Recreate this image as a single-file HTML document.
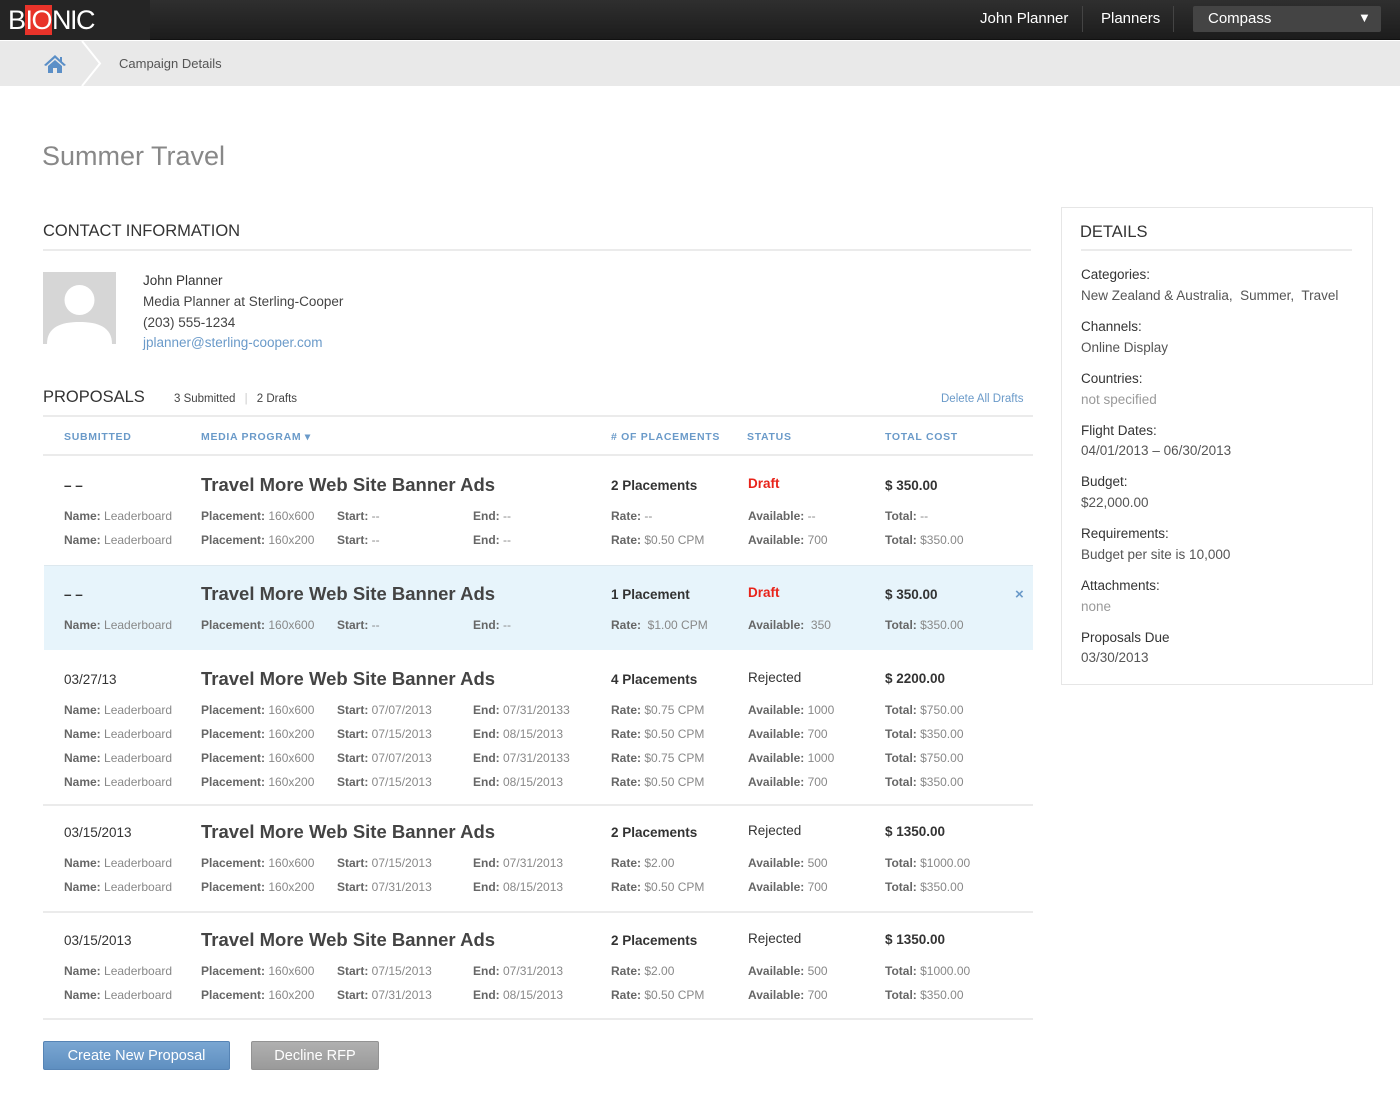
<!DOCTYPE html>
<html><head><meta charset="utf-8">
<style>
*{margin:0;padding:0;box-sizing:border-box}
body{width:1400px;height:1120px;background:#fff;font-family:"Liberation Sans",Arial,sans-serif;position:relative;overflow:hidden;color:#444}
.t{position:absolute;line-height:20px;white-space:nowrap}
.s{font-size:12px;color:#888;margin-top:1px}
.s b{color:#666;font-weight:bold}
.h{font-size:13.5px;font-weight:bold;color:#333;margin-top:1px}
.ti{font-size:18.5px;font-weight:bold;color:#444;line-height:24px;margin-top:1px}
.line{position:absolute;left:43px;width:990px;height:2px;background:#ebebeb}
.th{font-size:10.5px;font-weight:bold;color:#6a9ac9;letter-spacing:.7px;margin-top:1px}
.dl{font-size:13.5px;color:#333;margin-top:1px}
.dv{font-size:13.5px;color:#555;margin-top:1px}
</style></head><body>
<div style="position:absolute;left:0;top:0;width:1400px;height:40px;background:linear-gradient(#2f2f2f,#1c1c1c);border-bottom:1px solid #111"></div>
<div style="position:absolute;left:0;top:0;width:150px;height:40px;background:#252525"></div>
<div class="t" style="left:8px;top:5px;font-size:27px;line-height:30px;color:#fff;letter-spacing:-1.5px">B<span style="background:#e8332a;padding:0 1px">IO</span>NIC</div>
<div class="t" style="left:980px;top:9px;font-size:15px;color:#fff">John Planner</div>
<div style="position:absolute;left:1082px;top:6px;width:1px;height:26px;background:#444"></div>
<div class="t" style="left:1101px;top:9px;font-size:15px;color:#fff">Planners</div>
<div style="position:absolute;left:1173px;top:6px;width:1px;height:26px;background:#444"></div>
<div style="position:absolute;left:1193px;top:6px;width:188px;height:26px;background:#444;border-radius:2px"></div>
<div class="t" style="left:1208px;top:9px;font-size:15px;color:#fff">Compass</div>
<div class="t" style="left:1358px;top:8px;font-size:13px;color:#fff">▼</div>
<div style="position:absolute;left:0;top:41px;width:1400px;height:45px;background:#e9e9e9"></div>
<svg style="position:absolute;left:80px;top:41px" width="24" height="45"><polyline points="2,0 20,22.5 2,45" fill="none" stroke="#fff" stroke-width="2"/></svg>
<svg style="position:absolute;left:43px;top:54px" width="24" height="20" viewBox="0 0 24 20"><path d="M12 1 L1 11 L3 12 L12 4 L21 12 L23 11 L19 7.5 V3 H17 V5.7 Z" fill="#5b8fc7"/><path d="M5 12 L12 6 L19 12 V19 H14 V14 H10 V19 H5 Z" fill="#5b8fc7"/></svg>
<div class="t" style="left:119px;top:54px;font-size:13px;color:#555">Campaign Details</div>
<div class="t" style="left:42px;top:139px;font-size:27px;line-height:34px;color:#888">Summer Travel</div>
<div class="t" style="left:43px;top:221px;font-size:16.5px;color:#333">CONTACT INFORMATION</div>
<div class="line" style="top:249px;width:988px"></div>
<div style="position:absolute;left:43px;top:272px;width:73px;height:72px;background:#d6d6d6;overflow:hidden">
<svg width="73" height="72"><circle cx="36.5" cy="28" r="15" fill="#fff"/><path d="M4 72 C4 55 18 50 36.5 50 C55 50 69 55 69 72 Z" fill="#fff"/></svg></div>
<div class="t" style="left:143px;top:271px;font-size:13.5px;color:#333">John Planner</div>
<div class="t" style="left:143px;top:292px;font-size:13.5px;color:#444">Media Planner at Sterling-Cooper</div>
<div class="t" style="left:143px;top:313px;font-size:13.5px;color:#444">(203) 555-1234</div>
<div class="t" style="left:143px;top:333px;font-size:13.5px;color:#6a9ac9">jplanner@sterling-cooper.com</div>
<div class="t" style="left:43px;top:387px;font-size:16.5px;color:#333">PROPOSALS</div>
<div class="t" style="left:174px;top:389px;font-size:11.5px;color:#444">3 Submitted <span style="color:#ccc;margin:0 6px">|</span> 2 Drafts</div>
<div class="t" style="left:941px;top:389px;font-size:11.5px;color:#6a9ac9">Delete All Drafts</div>
<div class="line" style="top:415px"></div>
<div class="t th" style="left:64px;top:426px">SUBMITTED</div>
<div class="t th" style="left:201px;top:426px">MEDIA PROGRAM ▾</div>
<div class="t th" style="left:611px;top:426px"># OF PLACEMENTS</div>
<div class="t th" style="left:747px;top:426px">STATUS</div>
<div class="t th" style="left:885px;top:426px">TOTAL COST</div>
<div class="line" style="top:454px"></div>

<div class="t h" style="left:64px;top:475px">– –</div>
<div class="t ti" style="left:201px;top:472px">Travel More Web Site Banner Ads</div>
<div class="t h" style="left:611px;top:475px">2 Placements</div>
<div class="t h" style="left:748px;top:473px;color:#e8231a">Draft</div>
<div class="t h" style="left:885px;top:475px">$ 350.00</div>
<div class="t s" style="left:64px;top:505px"><b>Name:</b> Leaderboard</div><div class="t s" style="left:201px;top:505px"><b>Placement:</b> 160x600</div><div class="t s" style="left:337px;top:505px"><b>Start:</b> --</div><div class="t s" style="left:473px;top:505px"><b>End:</b> --</div><div class="t s" style="left:611px;top:505px"><b>Rate:</b> --</div><div class="t s" style="left:748px;top:505px"><b>Available:</b> --</div><div class="t s" style="left:885px;top:505px"><b>Total:</b> --</div>
<div class="t s" style="left:64px;top:529px"><b>Name:</b> Leaderboard</div><div class="t s" style="left:201px;top:529px"><b>Placement:</b> 160x200</div><div class="t s" style="left:337px;top:529px"><b>Start:</b> --</div><div class="t s" style="left:473px;top:529px"><b>End:</b> --</div><div class="t s" style="left:611px;top:529px"><b>Rate:</b> $0.50 CPM</div><div class="t s" style="left:748px;top:529px"><b>Available:</b> 700</div><div class="t s" style="left:885px;top:529px"><b>Total:</b> $350.00</div>

<div style="position:absolute;left:44px;top:565px;width:989px;height:85px;background:#e7f4fb;border-top:1px solid #dde8ee"></div>
<div class="t h" style="left:64px;top:584px">– –</div>
<div class="t ti" style="left:201px;top:581px">Travel More Web Site Banner Ads</div>
<div class="t h" style="left:611px;top:584px">1 Placement</div>
<div class="t h" style="left:748px;top:582px;color:#e8231a">Draft</div>
<div class="t h" style="left:885px;top:584px">$ 350.00</div>
<div class="t" style="left:1015px;top:585px;font-size:15px;font-weight:bold;color:#6a9ac9">×</div>
<div class="t s" style="left:64px;top:614px"><b>Name:</b> Leaderboard</div><div class="t s" style="left:201px;top:614px"><b>Placement:</b> 160x600</div><div class="t s" style="left:337px;top:614px"><b>Start:</b> --</div><div class="t s" style="left:473px;top:614px"><b>End:</b> --</div><div class="t s" style="left:611px;top:614px"><b>Rate:</b> &nbsp;$1.00 CPM</div><div class="t s" style="left:748px;top:614px"><b>Available:</b> &nbsp;350</div><div class="t s" style="left:885px;top:614px"><b>Total:</b> $350.00</div>

<div class="t h" style="left:64px;top:669px;font-weight:normal;color:#333">03/27/13</div>
<div class="t ti" style="left:201px;top:666px">Travel More Web Site Banner Ads</div>
<div class="t h" style="left:611px;top:669px">4 Placements</div>
<div class="t h" style="left:748px;top:667px;font-weight:normal;color:#333">Rejected</div>
<div class="t h" style="left:885px;top:668px">$ 2200.00</div>
<div class="t s" style="left:64px;top:699px"><b>Name:</b> Leaderboard</div><div class="t s" style="left:201px;top:699px"><b>Placement:</b> 160x600</div><div class="t s" style="left:337px;top:699px"><b>Start:</b> 07/07/2013</div><div class="t s" style="left:473px;top:699px"><b>End:</b> 07/31/20133</div><div class="t s" style="left:611px;top:699px"><b>Rate:</b> $0.75 CPM</div><div class="t s" style="left:748px;top:699px"><b>Available:</b> 1000</div><div class="t s" style="left:885px;top:699px"><b>Total:</b> $750.00</div>
<div class="t s" style="left:64px;top:723px"><b>Name:</b> Leaderboard</div><div class="t s" style="left:201px;top:723px"><b>Placement:</b> 160x200</div><div class="t s" style="left:337px;top:723px"><b>Start:</b> 07/15/2013</div><div class="t s" style="left:473px;top:723px"><b>End:</b> 08/15/2013</div><div class="t s" style="left:611px;top:723px"><b>Rate:</b> $0.50 CPM</div><div class="t s" style="left:748px;top:723px"><b>Available:</b> 700</div><div class="t s" style="left:885px;top:723px"><b>Total:</b> $350.00</div>
<div class="t s" style="left:64px;top:747px"><b>Name:</b> Leaderboard</div><div class="t s" style="left:201px;top:747px"><b>Placement:</b> 160x600</div><div class="t s" style="left:337px;top:747px"><b>Start:</b> 07/07/2013</div><div class="t s" style="left:473px;top:747px"><b>End:</b> 07/31/20133</div><div class="t s" style="left:611px;top:747px"><b>Rate:</b> $0.75 CPM</div><div class="t s" style="left:748px;top:747px"><b>Available:</b> 1000</div><div class="t s" style="left:885px;top:747px"><b>Total:</b> $750.00</div>
<div class="t s" style="left:64px;top:771px"><b>Name:</b> Leaderboard</div><div class="t s" style="left:201px;top:771px"><b>Placement:</b> 160x200</div><div class="t s" style="left:337px;top:771px"><b>Start:</b> 07/15/2013</div><div class="t s" style="left:473px;top:771px"><b>End:</b> 08/15/2013</div><div class="t s" style="left:611px;top:771px"><b>Rate:</b> $0.50 CPM</div><div class="t s" style="left:748px;top:771px"><b>Available:</b> 700</div><div class="t s" style="left:885px;top:771px"><b>Total:</b> $350.00</div>
<div class="line" style="top:804px"></div>

<div class="t h" style="left:64px;top:822px;font-weight:normal;color:#333">03/15/2013</div>
<div class="t ti" style="left:201px;top:819px">Travel More Web Site Banner Ads</div>
<div class="t h" style="left:611px;top:822px">2 Placements</div>
<div class="t h" style="left:748px;top:820px;font-weight:normal;color:#333">Rejected</div>
<div class="t h" style="left:885px;top:821px">$ 1350.00</div>
<div class="t s" style="left:64px;top:852px"><b>Name:</b> Leaderboard</div><div class="t s" style="left:201px;top:852px"><b>Placement:</b> 160x600</div><div class="t s" style="left:337px;top:852px"><b>Start:</b> 07/15/2013</div><div class="t s" style="left:473px;top:852px"><b>End:</b> 07/31/2013</div><div class="t s" style="left:611px;top:852px"><b>Rate:</b> $2.00</div><div class="t s" style="left:748px;top:852px"><b>Available:</b> 500</div><div class="t s" style="left:885px;top:852px"><b>Total:</b> $1000.00</div>
<div class="t s" style="left:64px;top:876px"><b>Name:</b> Leaderboard</div><div class="t s" style="left:201px;top:876px"><b>Placement:</b> 160x200</div><div class="t s" style="left:337px;top:876px"><b>Start:</b> 07/31/2013</div><div class="t s" style="left:473px;top:876px"><b>End:</b> 08/15/2013</div><div class="t s" style="left:611px;top:876px"><b>Rate:</b> $0.50 CPM</div><div class="t s" style="left:748px;top:876px"><b>Available:</b> 700</div><div class="t s" style="left:885px;top:876px"><b>Total:</b> $350.00</div>
<div class="line" style="top:911px"></div>

<div class="t h" style="left:64px;top:930px;font-weight:normal;color:#333">03/15/2013</div>
<div class="t ti" style="left:201px;top:927px">Travel More Web Site Banner Ads</div>
<div class="t h" style="left:611px;top:930px">2 Placements</div>
<div class="t h" style="left:748px;top:928px;font-weight:normal;color:#333">Rejected</div>
<div class="t h" style="left:885px;top:929px">$ 1350.00</div>
<div class="t s" style="left:64px;top:960px"><b>Name:</b> Leaderboard</div><div class="t s" style="left:201px;top:960px"><b>Placement:</b> 160x600</div><div class="t s" style="left:337px;top:960px"><b>Start:</b> 07/15/2013</div><div class="t s" style="left:473px;top:960px"><b>End:</b> 07/31/2013</div><div class="t s" style="left:611px;top:960px"><b>Rate:</b> $2.00</div><div class="t s" style="left:748px;top:960px"><b>Available:</b> 500</div><div class="t s" style="left:885px;top:960px"><b>Total:</b> $1000.00</div>
<div class="t s" style="left:64px;top:984px"><b>Name:</b> Leaderboard</div><div class="t s" style="left:201px;top:984px"><b>Placement:</b> 160x200</div><div class="t s" style="left:337px;top:984px"><b>Start:</b> 07/31/2013</div><div class="t s" style="left:473px;top:984px"><b>End:</b> 08/15/2013</div><div class="t s" style="left:611px;top:984px"><b>Rate:</b> $0.50 CPM</div><div class="t s" style="left:748px;top:984px"><b>Available:</b> 700</div><div class="t s" style="left:885px;top:984px"><b>Total:</b> $350.00</div>
<div class="line" style="top:1018px"></div>

<div style="position:absolute;left:43px;top:1041px;width:187px;height:29px;background:linear-gradient(#7aa6d2,#5f8fc0);border:1px solid #5684b5;border-radius:2px;color:#fff;font-size:14.5px;text-align:center;line-height:28px">Create New Proposal</div>
<div style="position:absolute;left:251px;top:1041px;width:128px;height:29px;background:linear-gradient(#b0b0b0,#9a9a9a);border:1px solid #939393;border-radius:2px;color:#fff;font-size:14.5px;text-align:center;line-height:28px">Decline RFP</div>

<div style="position:absolute;left:1061px;top:207px;width:312px;height:478px;border:1px solid #e6e6e6"></div>
<div class="t" style="left:1080px;top:222px;font-size:16.5px;color:#333">DETAILS</div>
<div style="position:absolute;left:1081px;top:249px;width:271px;height:2px;background:#ebebeb"></div>
<div class="t dl" style="left:1081px;top:264px">Categories:</div>
<div class="t dv" style="left:1081px;top:285px">New Zealand &amp; Australia,&nbsp; Summer,&nbsp; Travel</div>
<div class="t dl" style="left:1081px;top:316px">Channels:</div>
<div class="t dv" style="left:1081px;top:337px">Online Display</div>
<div class="t dl" style="left:1081px;top:368px">Countries:</div>
<div class="t dv" style="left:1081px;top:389px;color:#999">not specified</div>
<div class="t dl" style="left:1081px;top:420px">Flight Dates:</div>
<div class="t dv" style="left:1081px;top:440px">04/01/2013 – 06/30/2013</div>
<div class="t dl" style="left:1081px;top:471px">Budget:</div>
<div class="t dv" style="left:1081px;top:492px">$22,000.00</div>
<div class="t dl" style="left:1081px;top:523px">Requirements:</div>
<div class="t dv" style="left:1081px;top:544px">Budget per site is 10,000</div>
<div class="t dl" style="left:1081px;top:575px">Attachments:</div>
<div class="t dv" style="left:1081px;top:596px;color:#999">none</div>
<div class="t dl" style="left:1081px;top:627px">Proposals Due</div>
<div class="t dv" style="left:1081px;top:647px">03/30/2013</div>
</body></html>
